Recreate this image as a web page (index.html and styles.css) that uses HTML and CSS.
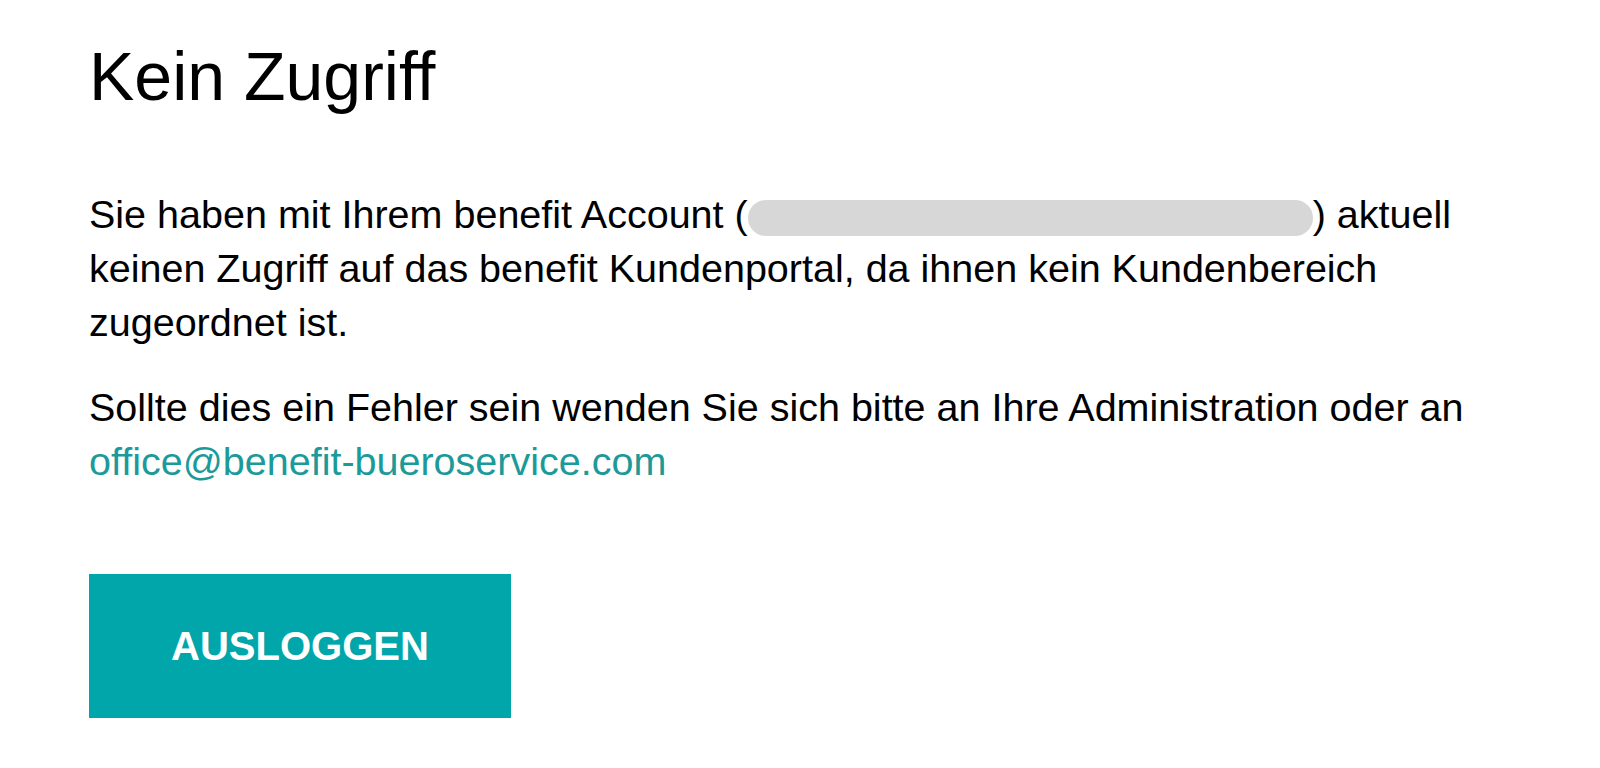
FILE: index.html
```html
<!DOCTYPE html>
<html lang="de">
<head>
<meta charset="utf-8">
<title>Kein Zugriff</title>
<link rel="stylesheet" href="styles.css">
</head>
<body>
<main class="page">
  <h1 class="title">Kein Zugriff</h1>
  <p class="text">Sie haben mit Ihrem benefit Account (<span class="redacted"></span>) aktuell keinen Zugriff auf das benefit Kundenportal, da ihnen kein Kundenbereich zugeordnet ist.</p>
  <p class="text">Sollte dies ein Fehler sein wenden Sie sich bitte an Ihre Administration oder an <a class="mail" href="mailto:office@benefit-bueroservice.com">office@benefit-bueroservice.com</a></p>
  <button class="logout" type="button">AUSLOGGEN</button>
</main>
</body>
</html>
```

FILE: styles.css
```css
html, body {
  margin: 0;
  padding: 0;
  background: #ffffff;
}

body {
  font-family: "Liberation Sans", Arial, sans-serif;
  color: #000000;
}

.page {
  padding: 37px 80px 0 89px;
  display: flex;
  flex-direction: column;
  align-items: flex-start;
}

.title {
  margin: 0;
  font-size: 68px;
  font-weight: 400;
  line-height: 79px;
}

.text {
  margin: 71px 0 0 0;
  font-size: 39.5px;
  line-height: 54px;
}

.text + .text {
  margin-top: 31px;
}

.redacted {
  display: inline-block;
  width: 565px;
  height: 36px;
  border-radius: 18px;
  background: #d7d7d7;
  vertical-align: -8px;
}

.mail {
  color: #1c9a9a;
  text-decoration: none;
}

.logout {
  margin-top: 86px;
  width: 422px;
  height: 144px;
  border: 0;
  padding: 0;
  background: #00a6aa;
  color: #ffffff;
  font-family: "Liberation Sans", Arial, sans-serif;
  font-weight: 700;
  font-size: 40px;
  cursor: pointer;
}
```
